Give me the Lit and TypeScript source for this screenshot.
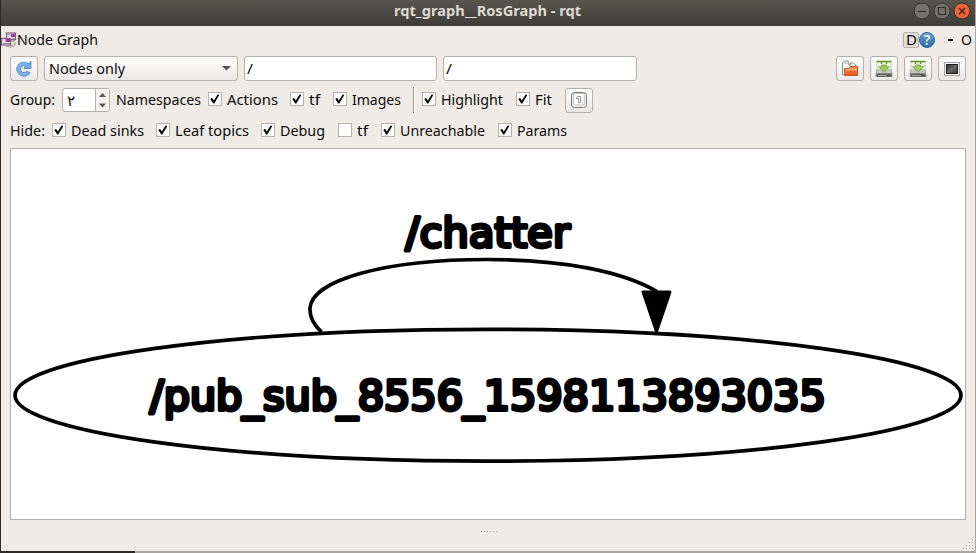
import { LitElement, html, svg, css } from "lit";
import { customElement, property } from "lit/decorators.js";

const textFont = css`
  font-family: "Noto Sans", "Open Sans", sans-serif;
  font-size: 14.5px;
  line-height: 20px;
  color: #0b0b0b;
`;

@customElement("check-item")
class CheckItem extends LitElement {
  @property() label = "";
  @property({ type: Boolean }) checked = false;
  @property({ type: Number }) textWidth = 40;
  static styles = css`
    :host { display: flex; align-items: center; flex: none; gap: 5px; ${textFont} white-space: nowrap; }
    .box { width: 12px; height: 12px; border: 1px solid #b5b1ac; background: #fff; flex: none; margin-bottom: 2px; }
    svg { display: block; }
    text { fill: #0b0b0b; }
    .label { overflow: visible; }
  `;
  render() {
    return html`<span class="box">${this.checked
      ? html`<svg width="12" height="12" viewBox="0 0 12 12"><path d="M1.3 6 3 4.8 4.8 7.4 8.8 1.3 10.2 2.2 5.3 10.4 4.2 10.4Z" fill="#050505"/></svg>` : ""}</span>
      <svg class="label" width=${this.textWidth} height="20"><text y="15" textLength=${this.textWidth} lengthAdjust="spacingAndGlyphs">${this.label}</text></svg>`;
  }
}

@customElement("fit-text")
class FitText extends LitElement {
  @property() text = "";
  @property({ type: Number }) width = 40;
  static styles = css`
    :host { display: block; flex: none; ${textFont} }
    svg { display: block; overflow: visible; }
    text { fill: currentColor; }
  `;
  render() {
    return html`<svg width=${this.width} height="20"><text y="15" textLength=${this.width} lengthAdjust="spacingAndGlyphs">${this.text}</text></svg>`;
  }
}

const drive = html`<svg width="18" height="18" viewBox="0 0 18 18">
  <path d="M2 9.500h14l1 5v2H1v-2Z" fill="#c4c5c2" stroke="#8b8d89" stroke-width=".8"/>
  <path d="M1.500 13.500h15v3.300h-15Z" fill="#555753"/><path d="M3 15.500h9" stroke="#aaa"/>
  <path d="M2 1.500h14v8H2Z" fill="#f3f6ee" stroke="#b5cc98" stroke-width=".8"/>
  <path d="M1.500 1.500h15M6.500 1v3M11.500 1v3" stroke="#5a9626" stroke-width="1.300"/>
  <path d="M6.500 5h5v1.800h3L9 12.300 3.500 6.800h3Z" fill="#9ccc60" stroke="#6a9c37" stroke-width=".7"/></svg>`;

const folder = html`<svg width="18" height="18" viewBox="0 0 18 18">
  <path d="M1.500 15V3l2-2h4v4h2V3h3l2 2v8Z" fill="#fafafa" stroke="#8f8f8f"/>
  <path d="M3 3h4M7.500 1v3h2" fill="none" stroke="#aaa"/>
  <defs><linearGradient id="o" x2="0" y2="1"><stop stop-color="#fb9a58"/><stop offset="1" stop-color="#e4501c"/></linearGradient></defs>
  <path d="M3.500 8.500H8l1-2h7.500v9h-13Z" fill="url(#o)" stroke="#c95320"/><path d="M5 9.500h10.500" stroke="#ffc49a"/></svg>`;

const screen = html`<svg width="18" height="18" viewBox="0 0 18 18">
  <defs><linearGradient id="s" x2="1" y2="1"><stop stop-color="#303030"/><stop offset=".5" stop-color="#666"/><stop offset="1" stop-color="#333"/></linearGradient></defs>
  <rect x="1.500" y="2.500" width="15" height="13" fill="#f7f7f7" stroke="#a4a4a4"/>
  <rect x="3.500" y="4.500" width="11" height="9" fill="url(#s)" stroke="#1e1e1e"/></svg>`;

const refresh = html`<svg width="18" height="18" viewBox="0 0 18 18">
  <path d="M13.500 11.500A5.200 5.200 0 1 1 12.300 5.300" fill="none" stroke="#4a86c4" stroke-width="4.600"/>
  <path d="M8.500 8.500h7.500V1.200Z" fill="#74a9df" stroke="#4a86c4" stroke-width=".8"/>
  <path d="M13.300 11.700A5.200 5.200 0 1 1 12.500 5.500" fill="none" stroke="#7db0e4" stroke-width="3.200"/></svg>`;

const fitIcon = html`<svg width="18" height="18" viewBox="0 0 18 18">
  <rect x="1.500" y="1.500" width="15" height="15" rx="3" fill="#f1f1ef" stroke="#777"/>
  <rect x="3.500" y="2.500" width="11" height="11.500" rx="2" fill="#fafafa" stroke="#c6c6c4"/>
  <path d="M6.500 6.500 8 5.500h2.500v6h-2v-4h-2Z" fill="#fff" stroke="#8d8d8d" stroke-width=".9"/></svg>`;

const nodesIcon = html`<svg width="16" height="16" viewBox="0 0 16 16">
  <path d="M5 13.500c4 2 9 1 9.500-3" fill="none" stroke="#b8b4b0" stroke-width="2"/>
  <rect x="5.500" y="1" width="9" height="6.500" fill="#efe4ee" stroke="#85618a" stroke-width="1.200"/>
  <path d="M10 2h4v3h-4Z" fill="#9a3a95"/>
  <path d="M6 2.500h3" stroke="#c79ac5" stroke-width="2"/>
  <rect x=".6" y="6.500" width="9" height="6.500" fill="#efe4ee" stroke="#85618a" stroke-width="1.200"/>
  <path d="M4.500 7h4.500v3H4.500Z" fill="#9a3a95"/><path d="M2 11.500h7M10 9h4M13 6v3" stroke="#8c8289"/></svg>`;

const helpIcon = html`<svg width="16" height="16" viewBox="0 0 16 16">
  <defs><linearGradient id="h" x2="0" y2="1"><stop stop-color="#6fa6d6"/><stop offset="1" stop-color="#2868a6"/></linearGradient></defs>
  <circle cx="8" cy="8" r="7.500" fill="url(#h)" stroke="#2f659b"/>
  <text x="8" y="12.800" text-anchor="middle" font-family="Open Sans, sans-serif" font-size="13.500" font-weight="600" fill="#fff">?</text></svg>`;

const topChecks = [
  { label: "Actions", on: true, w: 82, t: 51 },
  { label: "tf", on: true, w: 43, t: 11 },
  { label: "Images", on: true, w: 80, t: 49 },
];
const viewChecks = [
  { label: "Highlight", on: true, w: 94, t: 62 },
  { label: "Fit", on: true, w: 49, t: 17 },
];
const hideChecks = [
  { label: "Dead sinks", on: true, w: 104, t: 73 },
  { label: "Leaf topics", on: true, w: 105, t: 74 },
  { label: "Debug", on: true, w: 77, t: 45 },
  { label: "tf", on: false, w: 43, t: 11 },
  { label: "Unreachable", on: true, w: 117, t: 85 },
  { label: "Params", on: true, w: 70, t: 50 },
];

const checks = (list: typeof topChecks) => list.map((c) => html`
  <check-item style="width:${c.w}px" .label=${c.label} .checked=${c.on} .textWidth=${c.t}></check-item>`);

const cornerDots = [[9, 0], [6, 3], [9, 3], [3, 6], [6, 6], [9, 6], [0, 9], [3, 9], [6, 9], [9, 9]];

@customElement("app-root")
class AppRoot extends LitElement {
  static styles = css`
    :host { display: block; width: 976px; height: 553px; overflow: hidden; background: #2d2926; }
    * { box-sizing: border-box; }
    svg { display: block; flex: none; }
    .frame { height: 553px; display: flex; flex-direction: column; }
    .window { height: 551px; margin-left: 1px; border-right: 1px solid #aaa7a3; background: #efebe7; display: flex; flex-direction: column; }
    .under { height: 2px; margin-left: 135px; background: #a9a7a4; }
    .titlebar { height: 26px; flex: none; background: linear-gradient(#58554c, #3d3c37); display: grid; grid-template-columns: 393px 1fr auto; align-items: start; }
    .title { color: #dfdbd2; font-weight: 700; grid-column: 2; margin-top: 1px; }
    .controls { margin: 2px 4px 0 0; }
    .row { display: flex; flex: none; align-items: center; padding: 0 9px; }
    .dock { height: 28px; padding: 0 3px 0 0; }
    .tools { height: 28px; gap: 6px; align-items: center; padding-top: 1px; }
    .options { height: 36px; }
    .hide { height: 26px; padding-bottom: 1px; }
    .grow { flex: 1; }
    .btn { width: 28px; height: 25px; border: 1px solid #b3afaa; border-radius: 3px; background: linear-gradient(#fefefe, #ebe9e7); display: flex; align-items: center; justify-content: center; flex: none; }
    .combo { width: 194px; height: 25px; border: 1px solid #b3afaa; border-radius: 3px; background: linear-gradient(#fdfdfd, #ebe9e7); display: flex; align-items: center; justify-content: space-between; padding: 0 6px 0 4px; }
    .input { width: 193px; height: 25px; border: 1px solid #b3afaa; border-radius: 3px; background: #fff; display: flex; align-items: center; padding-left: 2px; }
    .input + .input { width: 194px; }
    .spin { width: 48px; height: 24px; border: 1px solid #b3afaa; border-radius: 3px; background: #fff; display: flex; overflow: hidden; margin-right: 6px; }
    .value { width: 32px; padding: 2px 0 0 4px; font: 15px/20px "DejaVu Sans", sans-serif; color: #0b0b0b; }
    .steps { flex: 1; border-left: 1px solid #b3afaa; background: #f5f3f1; display: flex; align-items: center; justify-content: center; }
    .sep { width: 2px; height: 26px; background: #fff; border-left: 1px solid #9d9995; margin-right: 7px; }
    .d { width: 16px; height: 16px; border: 1px solid #b3afaa; border-radius: 2px; background: #e3e0dc; display: flex; align-items: center; padding-left: 2px; }
    .dash { margin: 0 8px 0 13px; width: 5px; height: 2px; background: #111; }
    .canvas { margin: 4px 9px 0; width: 956px; height: 372px; border: 1px solid #b3afaa; background: #fff; flex: none; }
    .canvas text { font: 41.35px "DejaVu Sans", sans-serif; stroke: #000; stroke-width: 3.9px; stroke-linejoin: round; }
    .foot { flex: 1; display: flex; align-items: flex-end; padding: 0 1px 1px 478px; justify-content: space-between; }
    .grip { display: flex; gap: 2px; align-self: flex-start; margin: 11px 0 0 2px; }
    .grip i { width: 1px; height: 1px; background: #aaa6a1; box-shadow: 1px 1px #fff; }
  `;
  render() {
    return html`<div class="frame"><div class="window">
      <div class="titlebar">
        <fit-text class="title" .text=${"rqt_graph__RosGraph - rqt"} .width=${187}></fit-text>
        <svg class="controls" width="58" height="18" viewBox="0 0 58 18">
          <circle cx="9" cy="9" r="8" fill="#74726b" stroke="#34332f"/><path d="M5 9.500h8" stroke="#35342f" stroke-width="1.300"/>
          <circle cx="29" cy="9" r="8" fill="#74726b" stroke="#34332f"/><rect x="25.500" y="5.500" width="7" height="7" fill="none" stroke="#35342f" stroke-width="1.200"/>
          <circle cx="49" cy="9" r="8" fill="#ed6237" stroke="#34332f"/><path d="m46 6 6 6m0-6-6 6" stroke="#3a2119" stroke-width="1.300"/>
        </svg>
      </div>
      <div class="row dock">${nodesIcon}<fit-text .text=${"Node Graph"} .width=${81}></fit-text>
        <span class="grow"></span><span class="d"><fit-text .text=${"D"} .width=${11}></fit-text></span>${helpIcon}
        <span class="dash"></span><fit-text .text=${"O"} .width=${11}></fit-text></div>
      <div class="row tools"><span class="btn">${refresh}</span>
        <span class="combo"><fit-text .text=${"Nodes only"} .width=${76}></fit-text>
          <svg width="9" height="5"><path d="M0 0h9L4.500 4.500Z" fill="#555"/></svg></span>
        <span class="input"><fit-text .text=${"/"} .width=${6}></fit-text></span>
        <span class="input"><fit-text .text=${"/"} .width=${6}></fit-text></span>
        <span class="grow"></span>
        <span class="btn">${folder}</span><span class="btn">${drive}</span><span class="btn">${drive}</span><span class="btn">${screen}</span></div>
      <div class="row options"><fit-text style="width:52px" .text=${"Group:"} .width=${45}></fit-text>
        <span class="spin"><span class="value">٢</span><span class="steps"><svg width="7" height="15"><path d="M0 4h7L3.500 0ZM0 10.500h7L3.500 14.500Z" fill="#555"/></svg></span></span>
        <fit-text style="width:92px" .text=${"Namespaces"} .width=${85}></fit-text>
        ${checks(topChecks)}<span class="sep"></span>${checks(viewChecks)}<span class="btn">${fitIcon}</span></div>
      <div class="row hide"><fit-text style="width:42px" .text=${"Hide:"} .width=${35}></fit-text>${checks(hideChecks)}</div>
      <svg class="canvas" viewBox="11 149 954 370">
        <ellipse cx="488" cy="395.200" rx="473" ry="65.900" fill="none" stroke="#000" stroke-width="3.700"/>
        <path d="M321.500 332C313 324 309.500 316 310 308C312 280 385 259.500 487 259.500C562 259.500 622 271 657 291.500" fill="none" stroke="#000" stroke-width="3.700"/>
        <path d="M643 292h27l-13.500 39.500Z" stroke="#000" stroke-width="3" stroke-linejoin="round"/>
        <text x="405.500" y="246.500" textLength="164.500">/chatter</text>
        <text x="149.700" y="410" textLength="676">/pub_sub_8556_1598113893035</text>
      </svg>
      <div class="foot"><span class="grip">${[0, 1, 2, 3, 4, 5].map(() => html`<i></i>`)}</span>
        <svg width="11" height="11">${cornerDots.map(([x, y]) => svg`<rect x=${x} y=${y} width="1" height="1" fill="#aaa6a1"/>`)}</svg></div>
    </div><div class="under"></div></div>`;
  }
}
